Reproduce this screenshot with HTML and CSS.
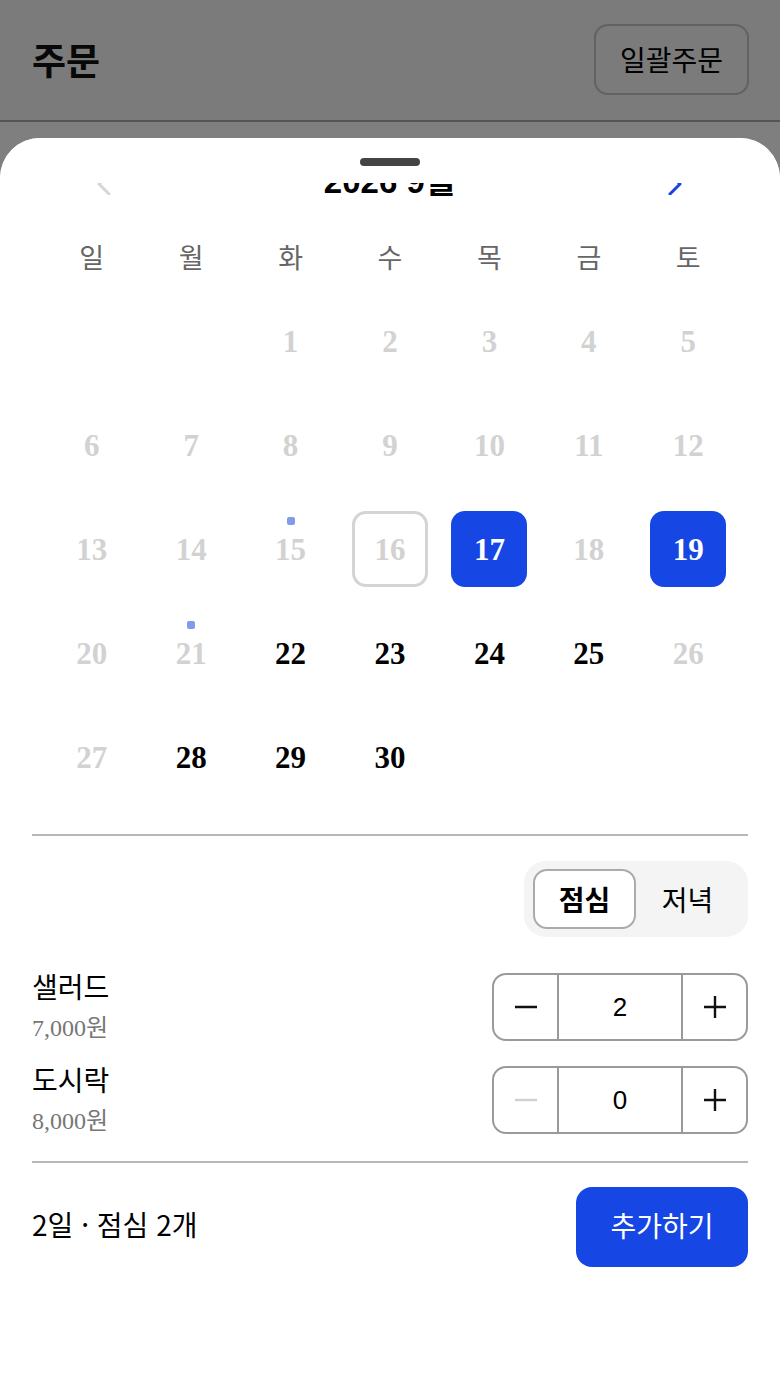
FILE: index.html
```html
<!DOCTYPE html>
<html lang="ko">
<head>
<meta charset="utf-8">
<title>주문</title>
<link rel="stylesheet" href="styles.css">
</head>
<body>
<div class="page">
  <header class="topbar">
    <h1 class="title">주문</h1>
    <button class="bulk-btn">일괄주문</button>
  </header>
  <div class="page-body"></div>
</div>

<div class="overlay"></div>

<section class="sheet">
  <div class="handle-area"><div class="handle"></div></div>
  <div class="viewport">
    <div class="content">
      <div class="month-nav">
        <button class="nav-btn prev" aria-label="이전 달">
          <svg width="22" height="22" viewBox="0 0 22 22"><polyline points="14,1 4,11 14,21" fill="none" stroke="#d6d6d6" stroke-width="3" stroke-linecap="round" stroke-linejoin="round"/></svg>
        </button>
        <div class="month-title">2026 9월</div>
        <button class="nav-btn next" aria-label="다음 달">
          <svg width="22" height="22" viewBox="0 0 22 22"><polyline points="8,1 18,11 8,21" fill="none" stroke="#1646e3" stroke-width="3" stroke-linecap="round" stroke-linejoin="round"/></svg>
        </button>
      </div>

      <div class="weekdays">
        <span>일</span><span>월</span><span>화</span><span>수</span><span>목</span><span>금</span><span>토</span>
      </div>

      <div class="dates">
        <div class="cell"></div>
        <div class="cell"></div>
        <div class="cell"><span class="day off">1</span></div>
        <div class="cell"><span class="day off">2</span></div>
        <div class="cell"><span class="day off">3</span></div>
        <div class="cell"><span class="day off">4</span></div>
        <div class="cell"><span class="day off">5</span></div>

        <div class="cell"><span class="day off">6</span></div>
        <div class="cell"><span class="day off">7</span></div>
        <div class="cell"><span class="day off">8</span></div>
        <div class="cell"><span class="day off">9</span></div>
        <div class="cell"><span class="day off">10</span></div>
        <div class="cell"><span class="day off">11</span></div>
        <div class="cell"><span class="day off">12</span></div>

        <div class="cell"><span class="day off">13</span></div>
        <div class="cell"><span class="day off">14</span></div>
        <div class="cell"><span class="day off has-dot">15</span></div>
        <div class="cell"><span class="day off today">16</span></div>
        <div class="cell"><span class="day selected">17</span></div>
        <div class="cell"><span class="day off">18</span></div>
        <div class="cell"><span class="day selected">19</span></div>

        <div class="cell"><span class="day off">20</span></div>
        <div class="cell"><span class="day off has-dot">21</span></div>
        <div class="cell"><span class="day">22</span></div>
        <div class="cell"><span class="day">23</span></div>
        <div class="cell"><span class="day">24</span></div>
        <div class="cell"><span class="day">25</span></div>
        <div class="cell"><span class="day off">26</span></div>

        <div class="cell"><span class="day off">27</span></div>
        <div class="cell"><span class="day">28</span></div>
        <div class="cell"><span class="day">29</span></div>
        <div class="cell"><span class="day">30</span></div>
        <div class="cell"></div>
        <div class="cell"></div>
        <div class="cell"></div>
      </div>

      <hr class="divider first">

      <div class="meal-row">
        <div class="segment">
          <button class="seg active">점심</button>
          <button class="seg">저녁</button>
        </div>
      </div>

      <div class="items">
        <div class="item">
          <div class="item-text">
            <div class="item-name">샐러드</div>
            <div class="item-price">7,000원</div>
          </div>
          <div class="stepper">
            <button class="step minus" aria-label="빼기">
              <svg width="22" height="22" viewBox="0 0 22 22"><line x1="0" y1="11" x2="22" y2="11" stroke="#111" stroke-width="2.4"/></svg>
            </button>
            <div class="qty">2</div>
            <button class="step plus" aria-label="더하기">
              <svg width="22" height="22" viewBox="0 0 22 22"><line x1="0" y1="11" x2="22" y2="11" stroke="#111" stroke-width="2.4"/><line x1="11" y1="0" x2="11" y2="22" stroke="#111" stroke-width="2.4"/></svg>
            </button>
          </div>
        </div>
        <div class="item">
          <div class="item-text">
            <div class="item-name">도시락</div>
            <div class="item-price">8,000원</div>
          </div>
          <div class="stepper">
            <button class="step minus" aria-label="빼기">
              <svg width="22" height="22" viewBox="0 0 22 22"><line x1="0" y1="11" x2="22" y2="11" stroke="#d2d2d2" stroke-width="2.4"/></svg>
            </button>
            <div class="qty">0</div>
            <button class="step plus" aria-label="더하기">
              <svg width="22" height="22" viewBox="0 0 22 22"><line x1="0" y1="11" x2="22" y2="11" stroke="#111" stroke-width="2.4"/><line x1="11" y1="0" x2="11" y2="22" stroke="#111" stroke-width="2.4"/></svg>
            </button>
          </div>
        </div>
      </div>

      <hr class="divider second">

      <div class="footer">
        <div class="summary">2일 · 점심 2개</div>
        <button class="add-btn">추가하기</button>
      </div>
    </div>
  </div>
</section>
</body>
</html>
```

FILE: styles.css
```css
* { box-sizing: border-box; }

html, body {
  margin: 0;
  padding: 0;
  width: 780px;
  height: 1386px;
  overflow: hidden;
  background: #ffffff;
  font-family: "Noto Sans CJK KR", "Liberation Sans", sans-serif;
  color: #111;
}

button {
  font-family: inherit;
  background: none;
  border: none;
  padding: 0;
  margin: 0;
  color: inherit;
  cursor: pointer;
}

.page {
  display: flex;
  flex-direction: column;
  height: 100%;
}

.topbar {
  height: 122px;
  padding: 0 32px;
  display: flex;
  align-items: center;
  justify-content: space-between;
  background: #f6f6f6;
  border-bottom: 2px solid #a8a8a8;
}

.title {
  margin: 0;
  font-size: 37px;
  font-weight: 700;
  line-height: 1;
  margin-top: -2px;
}

.bulk-btn {
  width: 155px;
  height: 71px;
  border: 2px solid #c4c4c4;
  border-radius: 14px;
  font-size: 28px;
  color: #000;
  margin-right: -1px;
  margin-top: -2px;
}

.page-body { flex: 1; background: #fff; }

.overlay {
  position: fixed;
  inset: 0;
  background: rgba(0, 0, 0, 0.5);
}

.sheet {
  position: fixed;
  left: 0;
  right: 0;
  top: 138px;
  bottom: 0;
  background: #fff;
  border-radius: 40px 40px 0 0;
  display: flex;
  flex-direction: column;
  overflow: hidden;
}

.handle-area {
  height: 45px;
  flex: none;
  display: flex;
  justify-content: center;
  padding-top: 20px;
  background: #fff;
  position: relative;
  z-index: 1;
}

.handle {
  width: 60px;
  height: 8px;
  border-radius: 4px;
  background: #444;
}

.viewport {
  flex: 1;
  overflow: hidden;
}

.content {
  margin-top: -24px;
  padding: 0 32px;
}

.month-nav {
  height: 44px;
  display: flex;
  align-items: center;
  justify-content: space-between;
  padding: 0 64px 0 63px;
}

.nav-btn {
  width: 22px;
  height: 22px;
  display: flex;
  margin-top: 6px;
}

.month-title {
  font-family: "Liberation Sans", "Noto Sans CJK KR", sans-serif;
  font-weight: 700;
  font-size: 33px;
  line-height: 44px;
  color: #000;
  padding-top: 2px;
}

.weekdays {
  margin-top: 24px;
  height: 62px;
  padding: 0 10px;
  display: grid;
  grid-template-columns: repeat(7, 1fr);
  align-items: start;
}

.weekdays span {
  text-align: center;
  font-size: 27px;
  line-height: 36px;
  color: #666;
  margin-top: 12px;
}

.dates {
  padding: 0 10px;
  display: grid;
  grid-template-columns: repeat(7, 1fr);
  grid-auto-rows: 104px;
}

.cell {
  display: flex;
  align-items: center;
  justify-content: center;
}

.day {
  position: relative;
  width: 76px;
  height: 76px;
  border-radius: 14px;
  display: flex;
  align-items: center;
  justify-content: center;
  font-family: "Liberation Serif", serif;
  font-weight: 700;
  font-size: 31px;
  color: #000;
  padding-top: 1px;
}

.day.off { color: #d2d2d2; }

.day.today {
  border: 3px solid #d4d4d4;
}

.day.selected {
  background: #1646e3;
  color: #fff;
}

.day.has-dot::before {
  content: "";
  position: absolute;
  top: 6px;
  left: 50%;
  width: 8px;
  height: 8px;
  margin-left: -4px;
  border-radius: 2px;
  background: #7f9cea;
}

.divider {
  margin: 0;
  border: none;
  height: 2px;
  background: #b8b8b8;
}

.divider.first { margin-top: 25px; }

.meal-row {
  margin-top: 25px;
  display: flex;
  justify-content: flex-end;
}

.segment {
  width: 224px;
  height: 76px;
  border-radius: 22px;
  background: #f4f4f4;
  padding: 8px 9px;
  display: flex;
  align-items: center;
}

.seg {
  flex: 1;
  height: 60px;
  border-radius: 14px;
  font-size: 28px;
  color: #000;
}

.seg.active {
  flex: none;
  width: 103px;
  background: #fff;
  border: 2px solid #ababab;
  font-weight: 700;
}

.items {
  margin-top: 31px;
}

.item {
  height: 93px;
  display: flex;
  justify-content: space-between;
  align-items: flex-start;
}

.item-text {
  display: flex;
  flex-direction: column;
}

.item-name {
  font-size: 28px;
  line-height: 36px;
  color: #000;
}

.item-price {
  margin-top: 6px;
  font-family: "Liberation Serif", "Noto Sans CJK KR", serif;
  font-size: 24px;
  line-height: 36px;
  color: #777;
}

.stepper {
  margin-top: 5px;
  width: 256px;
  height: 68px;
  border: 2px solid #9a9a9a;
  border-radius: 14px;
  display: flex;
  overflow: hidden;
}

.step {
  width: 65px;
  display: flex;
  align-items: center;
  justify-content: center;
}

.step.minus { border-right: 2px solid #9a9a9a; }
.step.plus { border-left: 2px solid #9a9a9a; }

.qty {
  flex: 1;
  display: flex;
  align-items: center;
  justify-content: center;
  font-family: "Liberation Sans", sans-serif;
  font-size: 26px;
  color: #000;
}

.divider.second { margin-top: 7px; }

.footer {
  margin-top: 24px;
  display: flex;
  justify-content: space-between;
  align-items: center;
}

.summary {
  font-size: 28px;
  color: #000;
  margin-top: -6px;
}

.add-btn {
  width: 172px;
  height: 80px;
  border-radius: 16px;
  background: #1646e3;
  color: #fff;
  font-size: 28px;
  padding-bottom: 4px;
}
```
